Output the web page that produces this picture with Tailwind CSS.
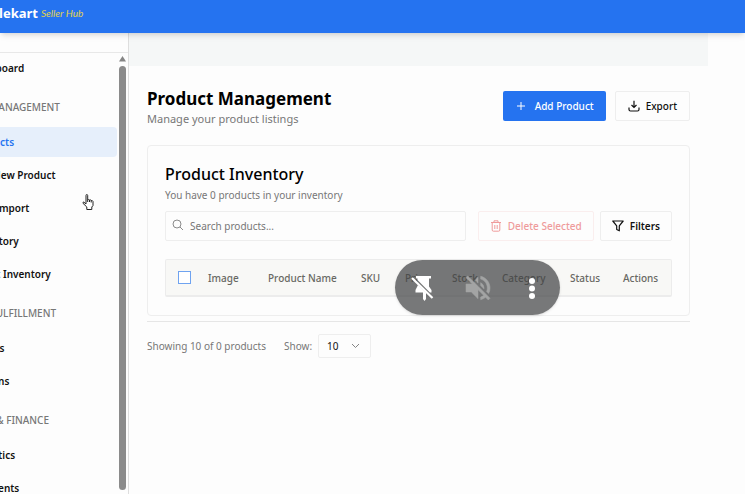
<!DOCTYPE html>
<html lang="en">
<head>
<meta charset="utf-8">
<meta name="viewport" content="width=device-width, initial-scale=1">
<title>Product Management</title>
<script src="https://cdn.jsdelivr.net/npm/@tailwindcss/browser@4"></script>
</head>
<body class="flex h-screen flex-col overflow-hidden bg-[#fdfdfd] font-['Noto_Sans','Open_Sans',sans-serif] text-[10px] leading-4 text-[#111111]">
<header class="relative z-10 flex h-[33px] shrink-0 items-center bg-[#2573f0] pb-2 shadow-md">
  <a href="#" class="-ml-4 flex items-center gap-[3px] whitespace-nowrap">
    <span class="text-[13px] font-bold text-white">Lelekart</span>
    <span class="font-['Lato',sans-serif] text-[10px] italic text-[#e2d24c]">Seller Hub</span>
  </a>
</header>
<div class="flex min-h-0 flex-1">
  <aside class="flex w-[129px] shrink-0 flex-col overflow-hidden border-r border-[#dedede]">
    <div class="h-5 shrink-0 border-b border-[#e8e8e8]"></div>
    <div class="flex min-h-0 flex-1">
      <nav class="-ml-[61px] w-[178px] shrink-0 whitespace-nowrap font-semibold">
        <a href="#" class="flex h-[30px] items-center pl-8">Dashboard</a>
        <h2 class="mt-4 mb-3 pr-[57px] text-right font-medium text-[#777777]">PRODUCT MANAGEMENT</h2>
        <div class="flex flex-col gap-[3px]">
          <a href="#" class="flex h-[30px] items-center rounded-sm bg-[#e6effb] pl-8 text-[#2573f0]">Products</a>
          <a href="#" class="flex h-[30px] items-center pl-8">Add New Product</a>
          <a href="#" class="flex h-[30px] items-center pl-8">Bulk Import</a>
          <a href="#" class="flex h-[30px] items-center pl-8">Inventory</a>
          <a href="#" class="flex h-[30px] items-center pl-8">Smart Inventory</a>
        </div>
        <h2 class="mt-4 mb-3 pr-[61px] text-right font-medium text-[#777777]">ORDERS &amp; FULFILLMENT</h2>
        <div class="flex flex-col gap-[3px]">
          <a href="#" class="flex h-[30px] items-center pl-8">Orders</a>
          <a href="#" class="flex h-[30px] items-center pl-8">Returns</a>
        </div>
        <h2 class="mt-4 mb-3 pr-[68px] text-right font-medium text-[#777777]">ANALYTICS &amp; FINANCE</h2>
        <div class="flex flex-col gap-[3px]">
          <a href="#" class="flex h-[30px] items-center pl-8">Analytics</a>
          <a href="#" class="flex h-[30px] items-center pl-8">Payments</a>
        </div>
      </nav>
      <div class="ml-0.5 flex w-[7px] shrink-0 flex-col items-center gap-1 pt-[3px] pb-1">
        <svg class="h-[6px] w-[7px] shrink-0" viewBox="0 0 7 6" fill="#858585" aria-hidden="true"><path d="M3.5 0 7 5.5H0z"/></svg>
        <div class="w-full flex-1 rounded-full bg-[#8b8b8b]"></div>
      </div>
    </div>
  </aside>
  <main class="min-w-0 flex-1 pr-[37px]">
    <div class="h-[33px] bg-[#f5f7f7]"></div>
    <div class="pr-[18px] pl-[18px]">
      <div class="flex items-start justify-between pt-[21px]">
        <div>
          <h1 class="text-[17px] leading-6 font-bold text-black">Product Management</h1>
          <p class="text-[11px] text-[#777777]">Manage your product listings</p>
        </div>
        <div class="mt-1 flex gap-[9px]">
          <button class="flex h-[30px] items-center gap-2 rounded-xs bg-[#2573f0] px-3 font-medium text-white">
            <svg class="size-3" viewBox="0 0 12 12" fill="none" stroke="currentColor" aria-hidden="true"><path d="M6 2v8M2 6h8"/></svg>Add Product</button>
          <button class="flex h-[30px] items-center gap-1.5 rounded-xs border border-[#eeeeee] px-3 font-medium">
            <svg class="size-3" viewBox="0 0 12 12" fill="none" stroke="currentColor" stroke-width="1.2" aria-hidden="true"><path d="M6 .8v6.700M3.500 5 6 7.500 8.500 5M1 7.500v2q0 1.500 1.500 1.500h7q1.500 0 1.500-1.500v-2"/></svg>Export</button>
        </div>
      </div>
      <section class="mt-[18px] rounded-sm border border-[#eeeeee] px-[17px] pt-4 pb-[18px]">
        <h2 class="text-base leading-6 font-medium text-black">Product Inventory</h2>
        <p class="mt-px text-[#777777]">You have 0 products in your inventory</p>
        <div class="mt-2 flex">
          <label class="relative mr-3 min-w-0 flex-1">
            <span class="sr-only">Search products</span>
            <svg class="absolute top-2 left-[7px] size-3" viewBox="0 0 12 12" fill="none" stroke="#8b8b8b" aria-hidden="true"><circle cx="5" cy="5" r="4"/><path d="m8 8 3 3"/></svg>
            <input type="search" placeholder="Search products..." class="h-[30px] w-full rounded-xs border border-[#eeeeee] bg-transparent pl-6 placeholder:text-[#777777]">
          </label>
          <button class="mr-1.5 flex h-[30px] items-center gap-1.5 rounded-xs border border-[#faeeee] px-[11px] font-medium text-[#ef9b9b]">
            <svg class="size-3" viewBox="0 0 12 12" fill="none" stroke="currentColor" aria-hidden="true"><path d="M1 2.500h10M4 2.500V.8h4v1.700M2.200 2.500v7.500q0 1.200 1.200 1.200h5.200q1.200 0 1.200-1.200V2.500M4.800 5v4M7.200 5v4"/></svg>Delete Selected</button>
          <button class="flex h-[30px] items-center gap-1.5 rounded-xs border border-[#eeeeee] px-[11px] font-semibold">
            <svg class="size-3" viewBox="0 0 12 12" fill="none" stroke="currentColor" stroke-width="1.2" stroke-linejoin="round" aria-hidden="true"><path d="M.8 1h10.400L7.300 5.800v5L4.700 9.500V5.800z"/></svg>Filters</button>
        </div>
        <div class="mt-[18px] rounded-xs border border-b-2 border-[#ececec] bg-[#f8f8f6]">
          <table class="w-full table-fixed text-left text-[#686863]">
            <colgroup><col class="w-[30px]"><col class="w-[60px]"><col class="w-[93px]"><col class="w-[44px]"><col class="w-[47px]"><col class="w-[50px]"><col class="w-[68px]"><col class="w-[53px]"><col></colgroup>
            <thead><tr class="h-[35px] whitespace-nowrap">
              <th scope="col" class="pl-3"><input type="checkbox" aria-label="Select all products" class="block size-[13px] appearance-none border border-solid border-[#6fa3f0] bg-white"></th>
              <th scope="col" class="pl-3 font-medium">Image</th>
              <th scope="col" class="pl-3 font-medium">Product Name</th>
              <th scope="col" class="pl-3 font-medium">SKU</th>
              <th scope="col" class="pl-3 font-medium">Price</th>
              <th scope="col" class="pl-3 font-medium">Stock</th>
              <th scope="col" class="pl-3 font-medium">Category</th>
              <th scope="col" class="pl-3 font-medium">Status</th>
              <th scope="col" class="pl-3 font-medium">Actions</th>
            </tr></thead>
          </table>
        </div>
      </section>
      <div class="mt-[5px] flex items-center border-t border-[#e6e6e6] pt-3 text-[#777777]">
        <p>Showing 10 of 0 products</p>
        <label for="rows" class="ml-[18px]">Show:</label>
        <div class="relative ml-1.5">
          <select id="rows" class="block h-6 w-[53px] appearance-none rounded-xs border border-[#eeeeee] bg-transparent pl-2 text-[#111111]"><option>10</option><option>20</option></select>
          <svg class="pointer-events-none absolute top-2 right-[11px] h-2 w-[9px]" viewBox="0 0 9 8" fill="none" stroke="#858585" aria-hidden="true"><path d="m1 2 3.500 3.500L8 2"/></svg>
        </div>
      </div>
    </div>
  </main>
</div>
<div class="absolute top-[260px] left-[395px] z-20 flex h-[55px] w-[165px] items-center justify-between rounded-full bg-[#424445]/72 px-3.5 text-white shadow">
  <button aria-label="Unpin"><svg class="size-7" viewBox="0 0 28 28" fill="currentColor" aria-hidden="true"><path d="M7 2h15v2.500h-2v8l2.500 3.500v2.500h-1.600L8.500 6V4.500H7zM9 11l8 7.500v6.500l-1.500 2-1.500-2v-6.500H6.500V16z"/><path d="m3 4 20.500 20" fill="none" stroke="currentColor" stroke-width="2.200"/></svg></button>
  <button aria-label="Unmute" class="text-[#a3a4a4]"><svg class="size-8" viewBox="0 0 24 24" fill="currentColor" aria-hidden="true"><path d="M16.500 12A4.500 4.500 0 0 0 14 7.970v2.210l2.450 2.450c.03-.2.050-.41.050-.63zm2.500 0c0 .94-.2 1.820-.54 2.640l1.510 1.510A8.800 8.800 0 0 0 21 12c0-4.280-2.990-7.860-7-8.770v2.060c2.890.86 5 3.540 5 6.710zM4.270 3 3 4.270 7.730 9H3v6h4l5 5v-6.730l4.250 4.250c-.67.52-1.420.93-2.250 1.180v2.060a9 9 0 0 0 3.690-1.810L19.730 21 21 19.730l-9-9zM12 4 9.910 6.090 12 8.180z" stroke="currentColor" stroke-width=".4"/></svg></button>
  <button aria-label="More"><svg class="size-7" viewBox="0 0 28 28" fill="currentColor" aria-hidden="true"><circle cx="14" cy="7" r="3"/><circle cx="14" cy="14.500" r="3"/><circle cx="14" cy="22" r="3"/></svg></button>
</div>
<svg class="pointer-events-none absolute top-[194px] left-[82px] z-30 h-[17px] w-3" viewBox="0 0 12 17" fill="#ffffff" stroke="#222222" stroke-linejoin="round" aria-hidden="true"><path d="M4 10V1.500Q4 .5 4.800.5T5.700 1.500V6q.8-1 1.800 0 1-.5 1.700.5 1.200-.4 1.800 1v4L9.800 13v2.500h-5V13L1 9.300q-.4-1.400.8-1.200L4 10M5.700 6v2M7.500 6v2M9.200 6.500v2"/></svg>
</body>
</html>
